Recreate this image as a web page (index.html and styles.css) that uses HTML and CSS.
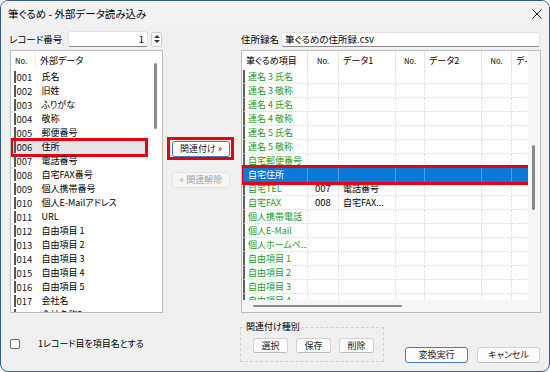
FILE: index.html
```html
<!DOCTYPE html>
<html lang="ja">
<head>
<meta charset="UTF-8" />
<title>筆ぐるめ - 外部データ読み込み</title>
<link rel="stylesheet" href="styles.css">
</head>
<body>

<div class="window">
  <div class="titlebar">
    <span class="title">筆ぐるめ - 外部データ読み込み</span>
    <svg class="close" width="10" height="10" viewBox="0 0 10 10"><path d="M0.5 0.5 L9.5 9.5 M9.5 0.5 L0.5 9.5" stroke="#222" stroke-width="1" fill="none"/></svg>
  </div>

  <div class="content">
    <!-- left: source data -->
    <div class="field-row left-top">
      <span class="field-label">レコード番号</span>
      <div class="text-input spin-input">1</div>
      <div class="spin-btn"><span class="arrow-up"></span><span class="arrow-down"></span></div>
    </div>

    <div class="listbox left-list">
      <div class="list-main">
        <div class="list-head">
          <span class="h-no">No.</span>
          <span class="h-name">外部データ</span>
        </div>
        <div class="lrow"><span class="bar"></span><span class="c-no">001</span><span>氏名</span></div>
        <div class="lrow"><span class="bar"></span><span class="c-no">002</span><span>旧姓</span></div>
        <div class="lrow"><span class="bar"></span><span class="c-no">003</span><span>ふりがな</span></div>
        <div class="lrow"><span class="bar"></span><span class="c-no">004</span><span>敬称</span></div>
        <div class="lrow"><span class="bar"></span><span class="c-no">005</span><span>郵便番号</span></div>
        <div class="lrow selected marked"><span class="bar"></span><span class="c-no">006</span><span>住所</span></div>
        <div class="lrow"><span class="bar"></span><span class="c-no">007</span><span>電話番号</span></div>
        <div class="lrow"><span class="bar"></span><span class="c-no">008</span><span>自宅FAX番号</span></div>
        <div class="lrow"><span class="bar"></span><span class="c-no">009</span><span>個人携帯番号</span></div>
        <div class="lrow"><span class="bar"></span><span class="c-no">010</span><span>個人E-Mailアドレス</span></div>
        <div class="lrow"><span class="bar"></span><span class="c-no">011</span><span>URL</span></div>
        <div class="lrow"><span class="bar"></span><span class="c-no">012</span><span>自由項目 1</span></div>
        <div class="lrow"><span class="bar"></span><span class="c-no">013</span><span>自由項目 2</span></div>
        <div class="lrow"><span class="bar"></span><span class="c-no">014</span><span>自由項目 3</span></div>
        <div class="lrow"><span class="bar"></span><span class="c-no">015</span><span>自由項目 4</span></div>
        <div class="lrow"><span class="bar"></span><span class="c-no">016</span><span>自由項目 5</span></div>
        <div class="lrow"><span class="bar"></span><span class="c-no">017</span><span>会社名</span></div>
        <div class="lrow"><span class="bar"></span><span class="c-no">018</span><span>会社名称2</span></div>
      </div>
      <div class="vscroll left-scroll"><span class="thumb"></span></div>
    </div>

    <div class="left-bottom">
      <span class="checkbox"></span>
      <span class="check-label">1レコード目を項目名とする</span>
    </div>

    <!-- middle: link buttons -->
    <div class="mid">
      <button class="btn btn-default btn-link marked">関連付け »</button>
      <button class="btn btn-link" disabled>« 関連解除</button>
    </div>

    <!-- right: address book fields -->
    <div class="field-row right-top">
      <span class="field-label short">住所録名</span>
      <div class="text-input name-input">筆ぐるめの住所録.csv</div>
    </div>

    <div class="listbox right-list">
      <div class="grid-view">
        <div class="grow ghead">
          <span class="cell w1">筆ぐるめ項目</span><span class="cell w2 num">No.</span><span class="cell w3">データ1</span><span class="cell w4 num">No.</span><span class="cell w5">データ2</span><span class="cell w6 num">No.</span><span class="cell w7">デ-</span>
        </div>
        <div class="grow"><span class="cell w1 item">連名 3 氏名</span><span class="cell w2"></span><span class="cell w3"></span><span class="cell w4"></span><span class="cell w5"></span><span class="cell w6"></span><span class="cell w7"></span></div>
        <div class="grow"><span class="cell w1 item">連名 3 敬称</span><span class="cell w2"></span><span class="cell w3"></span><span class="cell w4"></span><span class="cell w5"></span><span class="cell w6"></span><span class="cell w7"></span></div>
        <div class="grow"><span class="cell w1 item">連名 4 氏名</span><span class="cell w2"></span><span class="cell w3"></span><span class="cell w4"></span><span class="cell w5"></span><span class="cell w6"></span><span class="cell w7"></span></div>
        <div class="grow"><span class="cell w1 item">連名 4 敬称</span><span class="cell w2"></span><span class="cell w3"></span><span class="cell w4"></span><span class="cell w5"></span><span class="cell w6"></span><span class="cell w7"></span></div>
        <div class="grow"><span class="cell w1 item">連名 5 氏名</span><span class="cell w2"></span><span class="cell w3"></span><span class="cell w4"></span><span class="cell w5"></span><span class="cell w6"></span><span class="cell w7"></span></div>
        <div class="grow"><span class="cell w1 item">連名 5 敬称</span><span class="cell w2"></span><span class="cell w3"></span><span class="cell w4"></span><span class="cell w5"></span><span class="cell w6"></span><span class="cell w7"></span></div>
        <div class="grow"><span class="cell w1 item">自宅郵便番号</span><span class="cell w2"></span><span class="cell w3"></span><span class="cell w4"></span><span class="cell w5"></span><span class="cell w6"></span><span class="cell w7"></span></div>
        <div class="grow selected marked"><span class="cell w1 item">自宅住所</span><span class="cell w2"></span><span class="cell w3"></span><span class="cell w4"></span><span class="cell w5"></span><span class="cell w6"></span><span class="cell w7"></span></div>
        <div class="grow"><span class="cell w1 item">自宅TEL</span><span class="cell w2 num">007</span><span class="cell w3">電話番号</span><span class="cell w4"></span><span class="cell w5"></span><span class="cell w6"></span><span class="cell w7"></span></div>
        <div class="grow"><span class="cell w1 item">自宅FAX</span><span class="cell w2 num">008</span><span class="cell w3">自宅FAX...</span><span class="cell w4"></span><span class="cell w5"></span><span class="cell w6"></span><span class="cell w7"></span></div>
        <div class="grow"><span class="cell w1 item">個人携帯電話</span><span class="cell w2"></span><span class="cell w3"></span><span class="cell w4"></span><span class="cell w5"></span><span class="cell w6"></span><span class="cell w7"></span></div>
        <div class="grow"><span class="cell w1 item">個人E-Mail</span><span class="cell w2"></span><span class="cell w3"></span><span class="cell w4"></span><span class="cell w5"></span><span class="cell w6"></span><span class="cell w7"></span></div>
        <div class="grow"><span class="cell w1 item">個人ホームペ...</span><span class="cell w2"></span><span class="cell w3"></span><span class="cell w4"></span><span class="cell w5"></span><span class="cell w6"></span><span class="cell w7"></span></div>
        <div class="grow"><span class="cell w1 item">自由項目 1</span><span class="cell w2"></span><span class="cell w3"></span><span class="cell w4"></span><span class="cell w5"></span><span class="cell w6"></span><span class="cell w7"></span></div>
        <div class="grow"><span class="cell w1 item">自由項目 2</span><span class="cell w2"></span><span class="cell w3"></span><span class="cell w4"></span><span class="cell w5"></span><span class="cell w6"></span><span class="cell w7"></span></div>
        <div class="grow"><span class="cell w1 item">自由項目 3</span><span class="cell w2"></span><span class="cell w3"></span><span class="cell w4"></span><span class="cell w5"></span><span class="cell w6"></span><span class="cell w7"></span></div>
        <div class="grow"><span class="cell w1 item">自由項目 4</span><span class="cell w2"></span><span class="cell w3"></span><span class="cell w4"></span><span class="cell w5"></span><span class="cell w6"></span><span class="cell w7"></span></div>
      </div>
      <div class="vscroll right-vscroll"><span class="thumb"></span></div>
      <div class="hscroll"><span class="thumb"></span></div>
      <div class="corner"></div>
    </div>

    <div class="right-bottom">
      <fieldset class="group">
        <legend>関連付け種別</legend>
        <div class="group-btns">
          <button class="btn btn-small">選択</button>
          <button class="btn btn-small">保存</button>
          <button class="btn btn-small">削除</button>
        </div>
      </fieldset>
      <button class="btn btn-default btn-wide ok">変換実行</button>
      <button class="btn btn-wide cancel">キャンセル</button>
    </div>
  </div>
</div>

</body>
</html>
```

FILE: styles.css
```css
* {
  box-sizing: border-box;
}
body {
  margin: 0;
  font-family: "Noto Sans CJK JP", sans-serif;
  font-size: 9px;
  font-feature-settings: "palt";
  color: #000;
  background: #fff;
}

.window {
  width: 550px;
  height: 372px;
  background: #f0f0f0;
  border: 1px solid #2f5d94;
  border-radius: 8px;
  overflow: hidden;
  white-space: nowrap;
}
.titlebar {
  height: 25px;
  display: flex;
  align-items: center;
  justify-content: space-between;
  padding: 0 7px 0 7px;
  background: #f2f2f2;
}
.title {
  font-size: 10.5px;
  line-height: 12px;
}

.content {
  display: grid;
  grid-template-columns: 154px 78px 300px;
  grid-template-rows: 16px 263px auto;
  row-gap: 3px;
  padding: 5px 0 0 8px;
}
.left-top { grid-column: 1; grid-row: 1; }
.left-list { grid-column: 1; grid-row: 2; }
.left-bottom { grid-column: 1; grid-row: 3; }
.mid { grid-column: 2; grid-row: 2; }
.right-top { grid-column: 3; grid-row: 1; }
.right-list { grid-column: 3; grid-row: 2; }
.right-bottom { grid-column: 3; grid-row: 3; }

/* top fields */
.field-row {
  display: flex;
  align-items: center;
}
.field-label {
  width: 59px;
  line-height: 14px;
  font-size: 9.5px;
}
.field-label.short {
  width: 40px;
}
.text-input {
  height: 16px;
  background: #fff;
  border: 1px solid #e2e2e2;
  border-bottom-color: #8c8c8c;
  border-radius: 3px;
  line-height: 14px;
  padding: 0 3px;
  font-size: 9.5px;
}
.spin-input {
  width: 80px;
  text-align: right;
}
.name-input {
  width: 259px;
  height: 15px;
  line-height: 13px;
}
.spin-btn {
  width: 11px;
  height: 15px;
  margin-left: 3px;
  display: flex;
  flex-direction: column;
  justify-content: space-evenly;
  align-items: center;
  background: #fbfbfb;
  border: 1px solid #cfcfcf;
  border-radius: 2px;
}
.arrow-up, .arrow-down {
  width: 0;
  height: 0;
  border-left: 3px solid transparent;
  border-right: 3px solid transparent;
}
.arrow-up { border-bottom: 3px solid #333; }
.arrow-down { border-top: 3px solid #333; }

/* list boxes */
.listbox {
  background: #fff;
  border: 1px solid #bdbdbd;
  overflow: hidden;
}
.left-list {
  margin-left: 1px;
  display: flex;
}
.list-main {
  flex: 1;
  overflow: hidden;
}
.list-head {
  height: 19px;
  display: flex;
  align-items: center;
}
.h-no {
  width: 25px;
  padding-left: 4px;
  font-size: 7.5px;
  border-right: 1px solid #ececec;
  line-height: 17px;
}
.h-name {
  padding-left: 4px;
}
.lrow {
  position: relative;
  height: 14px;
  line-height: 14px;
  display: flex;
  align-items: center;
  padding-left: 3px;
}
.lrow.selected {
  background: #e6e6e6;
}
.bar {
  width: 1.5px;
  height: 12px;
  background: #555;
  margin-right: 1px;
}
.c-no {
  width: 25px;
  font-size: 9.5px;
  color: #222;
}
.vscroll {
  position: relative;
}
.left-scroll {
  width: 14px;
}
.left-scroll .thumb {
  position: absolute;
  left: 6px;
  top: 12px;
  width: 2.5px;
  height: 66px;
  border-radius: 2px;
  background: #8a8a8a;
}

/* red annotation boxes */
.marked {
  position: relative;
}
.marked::after {
  content: "";
  position: absolute;
  border: 3px solid #e60012;
  pointer-events: none;
}
.lrow.marked::after {
  left: -1px;
  right: 0;
  top: -2px;
  bottom: -3px;
}
.grow.marked::after {
  left: -2px;
  right: -3px;
  top: -3px;
  bottom: -3px;
  z-index: 2;
}
.btn.marked::after {
  left: -6px;
  right: -5px;
  top: -5px;
  bottom: -4px;
}

/* right grid */
.right-list {
  display: grid;
  grid-template-columns: 1fr 12px;
  grid-template-rows: 1fr 12px;
}
.grid-view {
  overflow: hidden;
}
.grow {
  display: flex;
  height: 14px;
  width: max-content;
}
.ghead {
  height: 19px;
}
.cell {
  flex: none;
  height: 100%;
  border-right: 1px dotted #dcdcdc;
  border-bottom: 1px dotted #dcdcdc;
  padding-left: 4px;
  line-height: 13px;
  overflow: hidden;
}
.ghead .cell {
  border-right: 1px solid #e6e6e6;
  border-bottom: none;
  line-height: 19px;
}
.ghead .num {
  font-size: 7.5px;
}
.num {
  text-align: center;
  padding-left: 0;
  font-size: 9.5px;
}
.w1 { width: 66px; }
.w2 { width: 31px; }
.w3 { width: 57px; }
.w4 { width: 29px; }
.w5 { width: 57px; }
.w6 { width: 30px; }
.w7 { width: 30px; }
.item {
  color: #1f9a24;
  padding-left: 3px;
  border-left: 2px solid #606060;
  margin-left: 1px;
  width: 65px;
}
.grow.selected {
  background: #0a78d7;
}
.grow.selected .cell {
  color: #fff;
  border-bottom-color: #0a78d7;
  border-right: 1px solid #4c9de3;
}
.grow.selected .item {
  border-left-color: #0a78d7;
}
.right-vscroll {
  background: #f6f6f6;
}
.right-vscroll .thumb {
  position: absolute;
  left: 4px;
  top: 94px;
  width: 2.5px;
  height: 65px;
  border-radius: 2px;
  background: #8a8a8a;
}
.hscroll {
  position: relative;
  background: #f6f6f6;
}
.hscroll .thumb {
  position: absolute;
  left: 11px;
  top: 5px;
  width: 149px;
  height: 2px;
  border-radius: 1px;
  background: #8a8a8a;
}
.corner {
  background: #f6f6f6;
}

/* bottom rows */
.left-bottom {
  display: flex;
  align-items: center;
  padding: 8px 0 0 1px;
}
.checkbox {
  width: 10px;
  height: 10px;
  border: 1px solid #6a6a6a;
  border-radius: 2px;
  background: #f7f7f7;
  margin-right: 18px;
}
.check-label {
  line-height: 12px;
}

.mid {
  display: flex;
  flex-direction: column;
  padding: 91px 0 0 9px;
  gap: 15px;
}

.btn {
  font: inherit;
  font-size: 9px;
  height: 16px;
  padding: 0;
  line-height: 14px;
  color: #1a1a1a;
  background: #fdfdfd;
  border: 1px solid #d2d2d2;
  border-bottom-color: #bdbdbd;
  border-radius: 3px;
}
.btn-default {
  border-color: #3c7fc2;
}
.btn:disabled {
  color: #a3a3a3;
  background: #f6f6f6;
  border-color: #e4e4e4;
}
.btn-link {
  width: 58px;
}

.right-bottom {
  display: flex;
  align-items: flex-start;
}
.group {
  margin: 5px 0 0 -1px;
  padding: 0;
  width: 144px;
  height: 41px;
  border: 1px dashed #d2d2d2;
}
.group legend {
  margin-left: 4px;
  padding: 0 1px;
  line-height: 12px;
}
.group-btns {
  display: flex;
  gap: 8px;
  padding: 5px 0 0 12px;
}
.btn-small {
  width: 35px;
  height: 15px;
  line-height: 13px;
}
.btn-wide {
  width: 63px;
  margin-top: 31px;
}
.ok {
  margin-left: 21px;
}
.cancel {
  margin-left: 9px;
}
```
